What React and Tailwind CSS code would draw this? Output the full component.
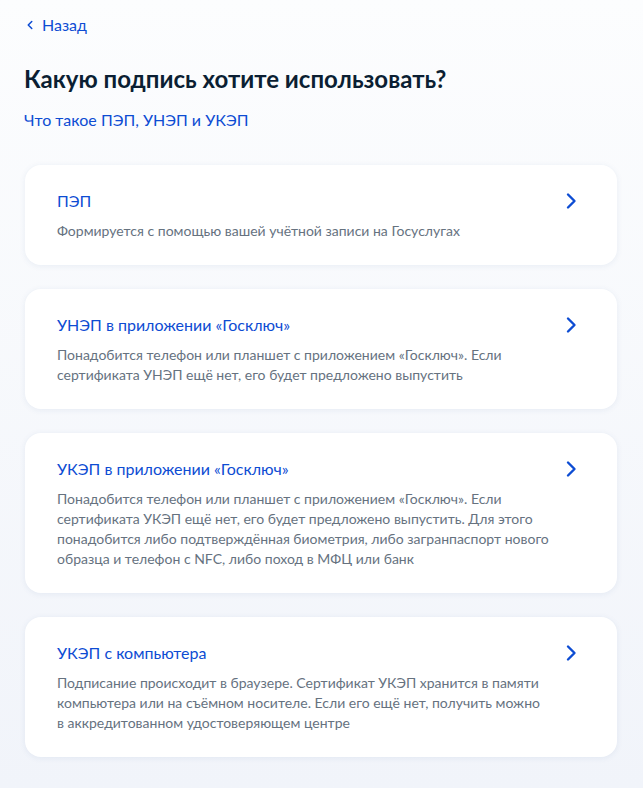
import { ChevronLeft } from 'lucide-react'

const options = [
  {
    title: 'ПЭП',
    text: 'Формируется с помощью вашей учётной записи на Госуслугах',
  },
  {
    title: 'УНЭП в приложении «Госключ»',
    text: 'Понадобится телефон или планшет с приложением «Госключ». Если сертификата УНЭП ещё нет, его будет предложено выпустить',
  },
  {
    title: 'УКЭП в приложении «Госключ»',
    text: 'Понадобится телефон или планшет с приложением «Госключ». Если сертификата УКЭП ещё нет, его будет предложено выпустить. Для этого понадобится либо подтверждённая биометрия, либо загранпаспорт нового образца и телефон с NFC, либо поход в МФЦ или банк',
  },
  {
    title: 'УКЭП с компьютера',
    text: 'Подписание происходит в браузере. Сертификат УКЭП хранится в памяти компьютера или на съёмном носителе. Если его ещё нет, получить можно в\u00A0аккредитованном удостоверяющем центре',
  },
]

const Arrow = () => (
  <svg width="12" height="18" viewBox="0 0 12 18" fill="none" className="shrink-0 mt-[3px]">
    <path d="M3 2.5L9.5 9L3 15.5" stroke="#0d4cd3" strokeWidth="2.4" strokeLinecap="round" strokeLinejoin="round" />
  </svg>
)

export default function App() {
  return (
    <div className="min-h-screen bg-gradient-to-b from-[#fcfdfe] to-[#f1f4fa] px-6 pt-[13px] pb-8 font-['Lato','Noto_Sans',sans-serif]">
      <a href="#" className="flex items-center gap-[5px] text-[16px] leading-6 text-[#0d4cd3]">
        <ChevronLeft className="w-[14px] h-[14px] ml-[-1px]" strokeWidth={2.6} />
        <span>Назад</span>
      </a>

      <h1 className="mt-[26px] text-[24px] leading-8 font-bold text-[#0b1f33]">Какую подпись хотите использовать?</h1>

      <a href="#" className="block mt-[13px] text-[16px] leading-6 text-[#0d4cd3]">Что такое ПЭП, УНЭП и УКЭП</a>

      <div className="mt-[33px] flex flex-col gap-6 ml-px mr-[2px]">
        {options.map((o) => (
          <div
            key={o.title}
            className="bg-white rounded-2xl shadow-[0_1px_6px_rgba(42,76,140,0.08)] pl-8 pr-[40px] pt-6 pb-6 flex items-start gap-[14px]"
          >
            <div className="flex-1">
              <div className="text-[16px] leading-6 text-[#0d4cd3]">{o.title}</div>
              <p className="mt-2 text-[14px] leading-5 text-[#66727f]">{o.text}</p>
            </div>
            <Arrow />
          </div>
        ))}
      </div>
    </div>
  )
}
